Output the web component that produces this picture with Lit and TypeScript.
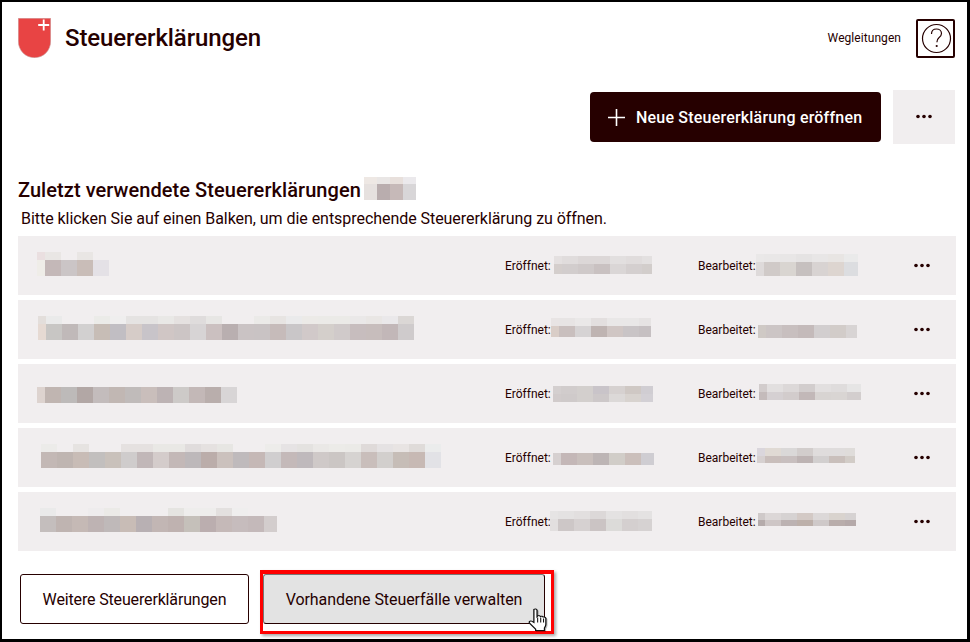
import { LitElement, html, css, svg } from "lit";
import { customElement } from "lit/decorators.js";

/** A pixelated redaction block: x offset, y offset, total width, first cell width, strip heights, strip colours. */
interface Mosaic { x: number; y: number; w: number; f: number; cw?: number; th: number; bh: number; top: string[]; bot: string[]; }

const E = "transparent";

const title: Mosaic = { x: 0, y: 0, w: 52, f: 13, cw: 13, th: 7, bh: 16, top: ["#eee8e4", "#e9e6e5", "#e8e0dc", "#ebe9ec"], bot: ["#e6e1df", "#b9adae", "#c6b9b8", "#d8d6d8"] };

const names: Mosaic[] = [
  { x: 19, y: 16, w: 72, f: 8, th: 8, bh: 16, top: ["#eadfe0", "#e9e6e4", E, "#e9e6e4", E], bot: ["#efede8", "#c4b8b8", "#cbc5c6", "#c9bdb8", "#e4e1e6"] },
  { x: 20, y: 16, w: 376, f: 8, th: 8, bh: 16,
    top: ["#e3dedb", "#eaeaea", E, E, "#ebebe8", "#efeeee", "#e5e3e2", "#e5e3e2", "#e9e8e6", "#e5e1e0", "#dfdcdc", "#e7e6e4", E, E, "#ebeae8", "#e7e4e2", "#eaeaeb", "#eceae7", "#ebeae7", "#ebeae7", "#eae8e8", "#e9e6e4", "#eae8ea", "#dbd7d5"],
    bot: ["#e6dad3", "#c8c6c4", "#c0b9b9", "#d2d0d0", "#c7bdb6", "#c1bec3", "#d6ccc8", "#c8c4c9", "#d0c6c5", "#ccc5c5", "#d7d4d5", "#cbc0c0", "#b9afb0", "#cac3c4", "#c9c3c4", "#c6bbba", "#c9c6c8", "#d1c9c9", "#d4cfcb", "#d0caca", "#c7bdbe", "#c7bdbc", "#c2b7b8", "#cfcbcc"] },
  { x: 19, y: 23, w: 200, f: 8, th: 0, bh: 16, top: [],
    bot: ["#ddd3cf", "#c0b5b1", "#bdbab9", "#b2a7a5", "#c3bcbc", "#c1b7b3", "#c0bbba", "#c9bebb", "#bdb3b4", "#cdcac8", "#c3b8b7", "#b9aeac", "#d8d5d6"] },
  { x: 23, y: 16, w: 400, f: 16, th: 8, bh: 16,
    top: ["#ecebe9", E, "#e6e3e1", E, E, "#e5e1e0", "#e5e1e0", "#e9e8e5", "#e9e8e5", "#e0dcdc", "#e5e1e0", "#e7e6e3", E, E, "#edecea", "#e6e3e4", "#e4e2e0", "#eae8e6", "#ecebe8", "#ebeae7", "#dfdad9", "#e5e2e3", "#e8e4e3", "#dfdbd9", "#ebecec"],
    bot: ["#c3b8b5", "#bfb5b1", "#c8bcb6", "#c2bfbe", "#c9c1bb", "#cfcccc", "#c1b7b8", "#d4cccb", "#c3b8b7", "#bdb8ba", "#bbadaa", "#cbc1bd", "#bfbabc", "#c5b8b6", "#d0cecf", "#c4b9b9", "#bfb9bc", "#cfc9c8", "#cbc6c4", "#d6d3d1", "#c9bebb", "#d2cfcd", "#c6bdb7", "#c7b9b4", "#e2e2e6"] },
  { x: 22, y: 16, w: 237, f: 16, th: 8, bh: 16,
    top: ["#eaeaea", E, E, "#eeeced", "#ebeae7", E, E, E, "#e5e4e1", "#eeedec", "#eeedec", "#e3e0df", "#efeeee", E, E],
    bot: ["#c4bebd", "#bfb4b1", "#c5b9b5", "#beb3b3", "#bfb9b9", "#c8bcb6", "#b8b0b3", "#c2b6b4", "#bfb2b0", "#c5c0ba", "#bbaeaf", "#c5b9b8", "#c6bcbd", "#c4b9ba", "#d3cdcd"] },
];

const opened: Mosaic[] = [
  { x: 4, y: 20, w: 98, f: 8, th: 8, bh: 10, top: ["#e4e0e0", "#e0dcdc", "#dcd7d7", "#dcd7d7", "#e2dfdf", "#e0dcdc", "#e3e0e0"], bot: ["#d4cecc", "#d2cdcd", "#cfc9c9", "#c9c1c1", "#dad6d6", "#d4cfcf", "#d2cdcb"] },
  { x: 1, y: 18, w: 100, f: 8, th: 8, bh: 11, top: ["#e8e4e4", "#e7e4e4", "#eae8e8", "#e3dfdf", "#e9e7e7", "#e9e7e7", "#e6e3e3"], bot: ["#d9cdc7", "#c9bfbe", "#d6d3d4", "#bfb4b2", "#d0c6c4", "#c9c4c6", "#c6c0c2"] },
  { x: 3, y: 22, w: 100, f: 8, th: 8, bh: 8, top: ["#d4cfcf", "#d1cccc", "#d3cfcd", "#c9c4c9", "#d6d1d0", "#cfc8c4", "#d0cdd2"], bot: ["#d1cbcb", "#cfcaca", "#d3cfcd", "#cdc8c9", "#dcd9d8", "#d8d3cf", "#d3d0d5"] },
  { x: 3, y: 25, w: 101, f: 8, th: 0, bh: 12, top: [], bot: ["#d6d0d0", "#c4b7b7", "#c9bfbc", "#bdb5b5", "#d1cdc8", "#cbbfbb", "#cfcdd2"] },
  { x: 0, y: 19, w: 102, f: 8, th: 8, bh: 12, top: ["#e6e4e4", "#e4e2e2", "#e2dfdf", "#dcd8d8", "#e4e2e2", "#e2dfdf", "#e4e2e2"], bot: ["#e2dfdf", "#cdc7c7", "#d6d1d1", "#cbc4c4", "#dcdbd9", "#d4cfcf", "#d6d2d2"] },
];

const edited: Mosaic[] = [
  { x: 8, y: 18, w: 102, f: 8, th: 8, bh: 14, top: ["#eae8e8", "#e9e7e7", "#e8e6e6", "#e5e3e3", "#e8e6e6", "#e8e5e3", "#eaeaea"], bot: ["#dedada", "#d0cac8", "#d9d5d1", "#c6c0bf", "#d8d3d2", "#ddd5d0", "#dcdde0"] },
  { x: 10, y: 25, w: 99, f: 8, th: 0, bh: 13, top: [], bot: ["#cfc9c5", "#ccc5c5", "#c8bfbf", "#c4baba", "#d2cecf", "#d2ccc9", "#d8d4d4"] },
  { x: 11, y: 20, w: 102, f: 8, th: 8, bh: 8, top: ["#d2cccc", "#e2dfdf", "#dcd8d8", "#d2cdcd", "#e2dfdf", "#dfdcdc", "#e6e5e5"], bot: ["#c4bbbb", "#d5d0d2", "#d2cccc", "#c2b8b8", "#d8d4d2", "#d9d5d3", "#d3cece"] },
  { x: 9, y: 20, w: 98, f: 8, th: 8, bh: 7, top: ["#dad6dc", "#e0dad4", "#dad8d8", "#d2cdcc", "#dfdcdc", "#dfdcdc", "#dfdcda"], bot: ["#d6d0d0", "#c9bebb", "#c8bfbf", "#bdb3b3", "#d2cfcf", "#c9bfbb", "#d2ccc7"] },
  { x: 10, y: 21, w: 98, f: 7, th: 7, bh: 6, top: ["#cfc9c9", "#dcd7d7", "#d6d2d2", "#d3c9c5", "#dcd8d8", "#d9d3ce", "#d6d2d2"], bot: ["#b5abab", "#cec6c6", "#bcb2b2", "#bdb0aa", "#cfc9c9", "#b9adab", "#b5a9a9"] },
];

@customElement("app-root")
export class AppRoot extends LitElement {
  static styles = css`
    :host { display: block; width: 970px; height: 642px; font-family: Roboto, "Liberation Sans", sans-serif; color: #260000; }
    .frame { box-sizing: border-box; width: 970px; height: 642px; border: solid #000; border-width: 2px 3px 3px 2px; background: #fff; padding: 0 11px 0 16px; display: flex; flex-direction: column; }
    .header { display: flex; align-items: center; height: 72px; padding-right: 1px; }
    .shield { width: 33px; height: 40px; }
    h1 { margin: 0 0 0 14px; font-size: 24px; font-weight: 500; line-height: 28px; flex: 1; letter-spacing: -0.1px; }
    .guide { font-size: 12px; margin-right: 15px; letter-spacing: 0.06px; margin-bottom: 1px; }
    .help { box-sizing: border-box; width: 39px; height: 39px; border: 2px solid #260000; display: flex; align-items: center; justify-content: center; border-radius: 2px; }
    .help svg { margin-left: 2px; }
    .actions { display: flex; justify-content: flex-end; align-items: flex-start; margin-top: 16px; padding-right: 1px; }
    .primary { box-sizing: border-box; width: 291px; height: 50px; margin-top: 2px; background: #260000; color: #fff; border-radius: 4px; display: flex; align-items: center; padding-left: 18px; gap: 11px; font-size: 16px; font-weight: 500; letter-spacing: 0.2px; }
    .more { width: 62px; height: 54px; margin-left: 12px; background: #f1eeef; display: flex; align-items: center; justify-content: center; }
    .head2 { display: flex; align-items: flex-start; margin-top: 33px; height: 23px; }
    h2 { margin: 0; font-size: 20px; font-weight: 500; line-height: 26px; margin-right: 3px; letter-spacing: 0.06px; }
    .hint { margin: 9px 0 0 3px; font-size: 16px; line-height: 20px; height: 20px; letter-spacing: -0.05px; }
    .rows { display: flex; flex-direction: column; gap: 5px; margin-top: 7px; }
    .row { height: 59px; background: #f1eeef; display: grid; grid-template-columns: 487px 193px 207px 1fr; font-size: 12px; }
    .cell { display: flex; align-items: center; height: 59px; }
    .l1 { flex: none; width: 45px; white-space: nowrap; }
    .l2 { flex: none; width: 50px; white-space: nowrap; }
    .dots { display: flex; align-items: center; padding-left: 8px; }
    .mosaic { display: flex; flex-direction: column; align-self: flex-start; overflow: hidden; flex: none; }
    .mrow { display: flex; }
    .mcell { flex: none; }
    .foot { display: flex; margin-top: 23px; margin-left: 2px; gap: 14px; align-items: flex-start; }
    .btn { box-sizing: border-box; height: 50px; border: 1px solid #260000; border-radius: 3px; display: flex; align-items: center; justify-content: center; font-size: 16px; background: #fff; }
    .b1 { width: 229px; letter-spacing: -0.15px; }
    .hi { position: relative; width: 282px; background: #e3e3e3; border-color: #777 #260000 #260000 #777; letter-spacing: -0.07px; }
    .mark { position: absolute; box-sizing: border-box; left: -4px; top: -5px; width: 294px; height: 64px; border: solid #f00; border-width: 4px 3px 3px 3px; box-shadow: 2px 2px 3px rgba(0,0,0,.35); }
    .cursor { position: absolute; left: 264px; top: 33px; width: 20px; height: 24px; filter: drop-shadow(1px 1px 0 rgba(0,0,0,.25)); }
  `;

  mosaic(m: Mosaic) {
    const cw = m.cw ?? 16;
    const row = (cells: string[], h: number) => html`<div class="mrow">${cells.map((c, i) => html`<div class="mcell" style="width:${i === 0 ? m.f : cw}px;height:${h}px;background:${c}"></div>`)}</div>`;
    return html`<div class="mosaic" style="margin-left:${m.x}px;margin-top:${m.y}px;width:${m.w}px">${m.th ? row(m.top, m.th) : ""}${row(m.bot, m.bh)}</div>`;
  }

  dots() {
    return svg`<svg width="18" height="6" viewBox="0 0 18 6"><circle cx="3" cy="2.5" r="1.8" fill="#260000"/><circle cx="9" cy="2.5" r="1.8" fill="#260000"/><circle cx="15" cy="2.5" r="1.8" fill="#260000"/></svg>`;
  }

  render() {
    return html`<div class="frame">
      <header class="header">
        <svg class="shield" viewBox="0 0 33 40">
          <path d="M0.3 0.3H32.7V23C32.7 32.5 25.5 39.7 16.5 39.7S0.3 32.5 0.3 23Z" fill="#e84444" stroke="#c9a0a0" stroke-width=".6"/>
          <path d="M25.7 1.5v11M20.2 7h11" stroke="#fff" stroke-width="1.8" fill="none"/>
        </svg>
        <h1>Steuererklärungen</h1>
        <span class="guide">Wegleitungen</span>
        <div class="help">
          <svg width="31" height="31" viewBox="0 0 31 31" fill="none" stroke="#260000" stroke-width="1.2">
            <circle cx="15.5" cy="15.5" r="14"/>
            <path d="M10.5 11c0-3.2 2.3-5 5-5s5 1.8 5 4.5c0 2.2-1.3 3.2-2.6 4.2-1.4 1.1-2 2.2-2 4.5"/>
            <circle cx="15.7" cy="23" r="1.1" fill="#260000" stroke="none"/>
          </svg>
        </div>
      </header>
      <div class="actions">
        <div class="primary">
          <svg width="17" height="17" viewBox="0 0 17 17" stroke="#fff" stroke-width="1.6"><path d="M8.5 0v17M0 8.5h17"/></svg>
          <span>Neue Steuererklärung eröffnen</span>
        </div>
        <div class="more">${this.dots()}</div>
      </div>
      <div class="head2"><h2>Zuletzt verwendete Steuererklärungen</h2>${this.mosaic(title)}</div>
      <p class="hint">Bitte klicken Sie auf einen Balken, um die entsprechende Steuererklärung zu öffnen.</p>
      <div class="rows">
        ${names.map((n, i) => html`<div class="row">
          <div class="cell">${this.mosaic(n)}</div>
          <div class="cell"><span class="l1">Eröffnet:</span>${this.mosaic(opened[i])}</div>
          <div class="cell"><span class="l2">Bearbeitet:</span>${this.mosaic(edited[i])}</div>
          <div class="dots">${this.dots()}</div>
        </div>`)}
      </div>
      <div class="foot">
        <div class="btn b1">Weitere Steuererklärungen</div>
        <div class="btn hi">Vorhandene Steuerfälle verwalten
          <div class="mark"></div>
          <svg class="cursor" viewBox="0 0 17 25" preserveAspectRatio="none">
            <path d="M5 1.5c1-1 2.5-.5 2.7 1V9l.6-.8c1-.6 2-.2 2.3.6.9-.6 2-.2 2.3.7 1-.4 2 .1 2.3 1.2V17c0 1.5-.6 2.6-1.2 3.8V23.5H6.5V22L1.3 15.8c-.8-1.3.4-2.8 1.8-2.1L5 15V3Z" fill="#fff" stroke="#111" stroke-width="1.1"/>
            <path d="M8.2 10v5M10.8 10v5M13.2 11v4" stroke="#111" stroke-width=".9" fill="none"/>
          </svg>
        </div>
      </div>
    </div>`;
  }
}
